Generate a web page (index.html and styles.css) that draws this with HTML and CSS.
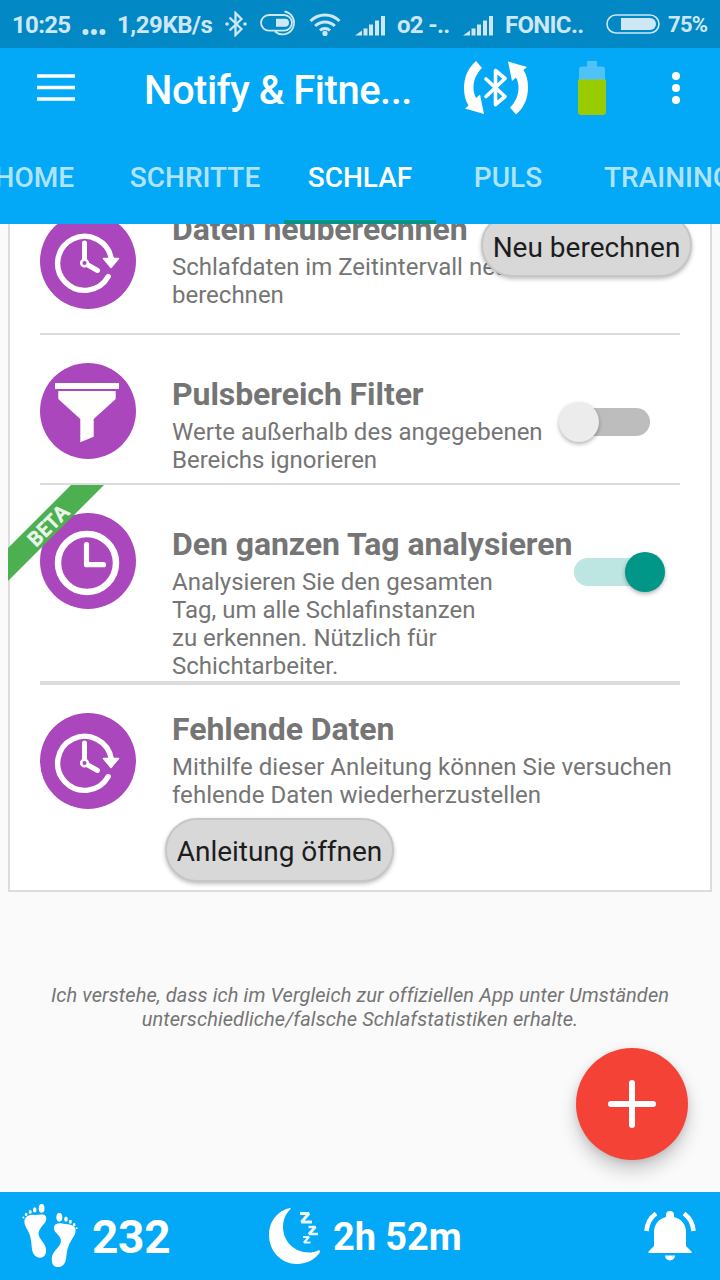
FILE: index.html
```html
<!DOCTYPE html>
<html lang="de">
<head>
<meta charset="utf-8">
<title>Notify &amp; Fitness</title>
<link rel="stylesheet" href="styles.css">
</head>
<body>
<svg class="defs" aria-hidden="true">
  <symbol id="history" viewBox="0 0 96 96">
    <path d="M71.300 46A27 27 0 1 0 68.200 63.500" fill="none" stroke="#fff" stroke-width="5.400" stroke-linecap="round"/>
    <path d="M63.500 45.500H78.500L71 54.500z" fill="#fff" stroke="#fff" stroke-width="1.500" stroke-linejoin="round"/>
    <path d="M44.500 47V30M47 51.500l10.500 6" fill="none" stroke="#fff" stroke-width="5" stroke-linecap="round"/>
    <circle cx="44.500" cy="50" r="3.300" fill="#ab47bc" stroke="#fff" stroke-width="2.500"/>
  </symbol>
  <symbol id="signal" viewBox="0 0 32 24">
    <path d="M0 22.500l7-5v5zM8.500 15.500h4v7h-4zM14 11.500h4v11h-4zM20 7.500h4v15h-4zM26 3h4v19.500h-4z" fill="currentColor"/>
  </symbol>
</svg>
<div class="screen">
  <div class="status">
    <span class="st-time">10:25</span>
    <svg class="st-dots" viewBox="0 0 24 8"><g fill="currentColor"><circle cx="3.500" cy="4" r="3"/><circle cx="12" cy="4" r="3"/><circle cx="20.500" cy="4" r="3"/></g></svg>
    <span class="st-rate">1,29KB/s</span>
    <svg class="st-bt" viewBox="0 0 22 26"><path d="M4.500 6.500l12 11.500-6 6V2l6 6L4.500 19.500" fill="none" stroke="currentColor" stroke-width="2.300"/><circle cx="2" cy="13" r="1.800" fill="currentColor"/><circle cx="20" cy="13" r="1.800" fill="currentColor"/></svg>
    <svg class="st-pill" viewBox="0 0 38 28"><path d="M24 5H9a8 7.800 0 0 0 0 15.600h15a8 7.800 0 0 0 0-15.600zM24.500 1.500a11.500 11.500 0 1 1-9.500 20" fill="none" stroke="currentColor" stroke-width="1.800"/><path d="M16 8.800h9a4 4 0 0 1 0 8h-9z" fill="currentColor"/></svg>
    <svg class="st-wifi" viewBox="0 0 32 24"><g fill="none" stroke="currentColor" stroke-width="3"><path d="M1.500 9a20.500 20.500 0 0 1 29 0M6.200 14a13.800 13.800 0 0 1 19.600 0M11 18.500a7.200 7.200 0 0 1 10 0"/></g><circle cx="16" cy="21.400" r="2.600" fill="currentColor"/></svg>
    <svg class="st-sig1"><use href="#signal"/></svg>
    <span class="st-net1">o2 -..</span>
    <svg class="st-sig2"><use href="#signal"/></svg>
    <span class="st-net2">FONIC..</span>
    <svg class="st-batt" viewBox="0 0 54 20"><rect x="1" y="1" width="52" height="18" rx="9" fill="none" stroke="currentColor" stroke-width="1.600"/><path d="M15 4h29a6 6 0 0 1 0 12H15z" fill="currentColor"/></svg>
    <span class="st-pct">75%</span>
  </div>

  <header class="appbar">
    <div class="toolbar">
      <svg class="menu" viewBox="0 0 38 28"><path d="M0 2h38M0 13.500h38M0 25h38" stroke="#fff" stroke-width="3.600"/></svg>
      <h1>Notify &amp; Fitne...</h1>
      <svg class="sync" viewBox="0 0 64 54">
        <g fill="#fff">
          <path id="arc" d="M12 0C4 7 0 16 0 27c0 7 1.500 13 4.500 17.500L1 47.500 20 53l-4-19.500-4 3.500C10 33 9.500 30 9.500 27c0-8 3-14.500 8.500-20z"/>
          <use href="#arc" transform="rotate(180 32 26.700)"/>
        </g>
        <path d="M22 18l19 17.500-9.500 8V9.500l9.500 8L22 35.500" fill="none" stroke="#fff" stroke-width="3.600" stroke-linecap="round" stroke-linejoin="round"/>
      </svg>
      <svg class="band" viewBox="0 0 28 54"><path d="M9 0h10v5.500h5a3 3 0 0 1 3 3V20H1V8.500a3 3 0 0 1 3-3h5z" fill="#4fc3f7"/><path d="M0 18.500h28V51a3 3 0 0 1-3 3H3a3 3 0 0 1-3-3z" fill="#99cc00"/></svg>
      <svg class="more" viewBox="0 0 8 32"><g fill="#fff"><circle cx="4" cy="4" r="4"/><circle cx="4" cy="16" r="4"/><circle cx="4" cy="28" r="4"/></g></svg>
    </div>
    <nav class="tabs">
      <span class="tab tab-home">HOME</span>
      <span class="tab tab-steps">SCHRITTE</span>
      <span class="tab tab-sleep active">SCHLAF</span>
      <span class="tab tab-pulse">PULS</span>
      <span class="tab tab-train">TRAINING</span>
    </nav>
  </header>

  <main>
    <section class="card">
      <div class="row row-recalc">
        <div class="badge"><svg><use href="#history"/></svg></div>
        <div class="text">
          <h2>Daten neuberechnen</h2>
          <p>Schlafdaten im Zeitintervall neu<br>berechnen</p>
        </div>
        <button class="btn btn-recalc">Neu berechnen</button>
      </div>
      <div class="row row-pulse">
        <div class="badge"><svg viewBox="0 0 96 96"><path d="M15 20h64v6H15zM18.300 28h57.400v8L53.700 56v17.700L40.300 79.300V56l-22-20z" fill="#fffffd"/></svg></div>
        <div class="text">
          <h2>Pulsbereich Filter</h2>
          <p>Werte außerhalb des angegebenen<br>Bereichs ignorieren</p>
        </div>
        <div class="switch"><i></i></div>
      </div>
      <div class="row row-day">
        <div class="badge"><svg viewBox="0 0 96 96"><g fill="none" stroke="#fff"><circle cx="47" cy="50" r="29" stroke-width="6.500"/><path d="M46.500 31.500v20.200h17" stroke-width="5.200" stroke-linecap="round" stroke-linejoin="round"/></g></svg></div>
        <div class="text">
          <h2>Den ganzen Tag analysieren</h2>
          <p>Analysieren Sie den gesamten<br>Tag, um alle Schlafinstanzen<br>zu erkennen. Nützlich für<br>Schichtarbeiter.</p>
        </div>
        <div class="switch on"><i></i></div>
        <svg class="ribbon" viewBox="0 0 96 96"><path d="M63 0h33L0 96V63z" fill="#4caf50"/><text x="40.500" y="41" transform="rotate(-45 40.500 41)" dy="6.500" text-anchor="middle" textLength="49">BETA</text></svg>
      </div>
      <div class="row row-missing">
        <div class="badge"><svg><use href="#history"/></svg></div>
        <div class="text">
          <h2>Fehlende Daten</h2>
          <p>Mithilfe dieser Anleitung können Sie versuchen<br>fehlende Daten wiederherzustellen</p>
          <button class="btn btn-guide">Anleitung öffnen</button>
        </div>
      </div>
    </section>
    <p class="note">Ich verstehe, dass ich im Vergleich zur offiziellen App unter Umständen<br>unterschiedliche/falsche Schlafstatistiken erhalte.</p>
    <button class="fab" aria-label="Hinzufügen"><svg viewBox="0 0 48 48"><path d="M24 3v42M3 24h42" stroke="#fff" stroke-width="6" stroke-linecap="round"/></svg></button>
  </main>

  <footer class="bottom">
    <svg class="feet" viewBox="0 0 56 66">
      <g fill="#fff">
        <path d="M2 18c0-4 3-6.500 8-7 5 .3 9-1 12 0 3 1.500 3 6 0 9-3 3.500-6 7-5.500 11 .5 5 7 9 7.500 15 .3 5-1.500 8.500-6 8.500-5 0-8-4-8.500-10C9 36 8 32 5.500 27 4 24 2 21.500 2 18z"/>
        <ellipse cx="19.500" cy="4.500" rx="2.900" ry="4.400"/><ellipse cx="12.500" cy="6" rx="1.800" ry="2.700"/><ellipse cx="7.900" cy="8" rx="1.500" ry="2"/><ellipse cx="3.800" cy="10.700" rx="1.300" ry="1.700"/><circle cx="1" cy="13.700" r="1"/>
        <path d="M54 27c0-4-3-6-8-6.500-5-.5-9-2-12 0-3 2-2.500 6 .5 9 3 3.500 5 5 4.500 9-.5 5-8 9-9 15-.8 6 1 10.500 6 10.500s8-4 8.500-10c.5-7 2-12 5-17 2.500-4 4.500-6 4.500-10z"/>
        <ellipse cx="37.500" cy="13.500" rx="3" ry="4.400"/><ellipse cx="44.200" cy="15.300" rx="1.800" ry="2.700"/><ellipse cx="48.700" cy="18" rx="1.500" ry="2.100"/><ellipse cx="52.500" cy="21" rx="1.300" ry="1.700"/><circle cx="55" cy="24.500" r="1"/>
      </g>
    </svg>
    <span class="steps">232</span>
    <svg class="moon" viewBox="0 0 52 58">
      <path d="M21 1C9 3.500 0 14 0 28c0 16 12 29 28 29 10 0 19-5 23-12 0-1.500-1-2-2-1.500-3 1.500-6 2-9 2C25 45.500 14 34 14 20c0-7 2.500-13 7.500-18 .3-.7 0-1-.5-1z" fill="#fff"/>
      <g fill="none" stroke="#e8f6ff" stroke-linejoin="bevel"><path d="M31 6.500h9L32.500 15H43" stroke-width="3"/><path d="M39.500 20h7l-6.500 7h9" stroke-width="2.700"/><path d="M34 30h6l-5 5.500h6.500" stroke-width="2.200"/></g>
    </svg>
    <span class="sleep">2h 52m</span>
    <svg class="bell" viewBox="0 0 52 50">
      <path d="M22 4a4 4 0 0 1 8 0v2c8 2 12 8 12 15v14l5.500 5.500V42h-43v-1.500L10 35V21C10 14 14 8 22 6z" fill="#fff"/>
      <path d="M21 44.500h10a5 5 0 0 1-10 0z" fill="#fff"/>
      <path d="M2.500 20C3 12.500 6.500 6.500 12 2.500M49.500 20C49 12.500 45.500 6.500 40 2.500" fill="none" stroke="#fff" stroke-width="4.600"/>
    </svg>
  </footer>
</div>
</body>
</html>
```
FILE: styles.css
```css
* { box-sizing: border-box; }
body { margin: 0; font-family: Roboto, "Liberation Sans", sans-serif; }
h1, h2, p { margin: 0; }
svg { display: block; flex: none; }
.defs { position: absolute; width: 0; height: 0; }
.screen { width: 720px; height: 1280px; display: flex; flex-direction: column; overflow: hidden; background: #fafafa; }

.status { height: 48px; flex: none; display: flex; align-items: center; background: #0288c4; color: #cde7f5; font-size: 24px; font-weight: 700; line-height: 48px; letter-spacing: -.7px; padding-left: 12px; white-space: nowrap; }
.status span { flex: none; padding-top: 2px; }
.st-time { width: 70px; }
.st-dots { width: 24px; height: 8px; margin-top: 15px; }
.status .st-rate { width: 119px; padding-left: 11px; letter-spacing: -.45px; }
.st-bt { width: 22px; height: 26px; }
.st-pill { width: 38px; height: 28px; margin-left: 13px; }
.st-wifi { width: 32px; height: 24px; margin-left: 11px; }
.st-sig1, .st-sig2 { width: 32px; height: 24px; margin-left: 14px; margin-top: 1px; }
.st-net1 { width: 52px; margin-left: 10px; }
.st-net2 { width: 84px; margin-left: 10px; }
.st-batt { width: 54px; height: 20px; margin-left: 17px; }
.st-pct { margin-left: 8px; font-size: 22px; }

.appbar { height: 176px; flex: none; background: #03a9f6; color: #fff; display: flex; flex-direction: column; justify-content: space-between; }
.toolbar { height: 84px; display: flex; align-items: center; padding-left: 37px; }
.menu { width: 38px; height: 28px; margin-bottom: 4px; }
h1 { width: 320px; margin-left: 69px; padding-top: 2px; font-size: 40px; font-weight: 500; line-height: 48px; letter-spacing: -.5px; white-space: nowrap; }
.sync { width: 64px; height: 54px; margin-top: -4px; }
.band { width: 28px; height: 54px; margin-left: 50px; margin-top: -4px; }
.more { width: 8px; height: 32px; margin-left: 66px; margin-top: -4px; }
.tabs { height: 92px; display: flex; overflow: hidden; font-size: 28px; font-weight: 500; line-height: 92px; white-space: nowrap; color: rgba(255,255,255,.7); }
.tab { flex: none; text-align: center; }
.tab-home { width: 106px; padding-right: 32px; display: flex; justify-content: flex-end; }
.tab-steps { width: 178px; }
.tab-sleep { width: 152px; }
.tab-pulse { width: 144px; }
.tab-train { width: 168px; padding-left: 24px; text-align: left; }
.active { color: #fff; border-bottom: 4px solid #009688; }

main { height: 968px; flex: none; overflow: hidden; position: relative; }
.card { width: 704px; height: 709px; margin: -41px 8px 0; border: 2px solid #dcdcdc; background: #fff; padding: 0 30px; }
.row { height: 150px; display: flex; position: relative; border-bottom: 2px solid #dcdcdc; }
.row-day { height: 200px; border-bottom-width: 4px; }
.row-missing { height: 205px; border-bottom: 0; }
.badge { width: 96px; height: 96px; flex: none; margin: 28px 36px 0 0; border-radius: 50%; background: #ab47bc; }
.badge svg { width: 96px; height: 96px; }
.text { flex: none; padding-top: 25px; color: #757575; white-space: nowrap; }
.row-pulse .text, .row-day .text { padding-top: 40px; }
h2 { font-size: 32px; font-weight: 700; line-height: 38px; letter-spacing: -.07px; }
.text p { margin-top: 5px; font-size: 24px; line-height: 28px; }
.row-missing .text p { letter-spacing: .05px; }
.btn { display: block; height: 64px; padding: 4px 0 0; border: 2px solid #c6c6c6; border-radius: 32px; background: #d8d8d8; color: #1d1d1d; font: 400 28px/54px Roboto, sans-serif; text-align: center; white-space: nowrap; box-shadow: 0 2px 4px rgba(0,0,0,.26); }
.btn-recalc { position: absolute; right: -12px; top: 28px; width: 211px; padding-top: 6px; }
.btn-guide { width: 229px; margin: 9px 0 0 -7px; letter-spacing: -.05px; }
.switch { width: 91px; height: 28px; margin: 73px 30px 0 auto; border-radius: 14px; background: linear-gradient(to right, transparent 15px, #bdbdbd 15px); position: relative; }
.switch i { position: absolute; left: 0; top: -6px; width: 40px; height: 40px; border-radius: 50%; background: #ececec; box-shadow: 0 2px 4px rgba(0,0,0,.3); }
.switch.on { margin-right: 15px; background: #bde5e1; }
.switch.on i { left: auto; right: 0; background: #009688; }
.ribbon { position: absolute; left: -32px; top: 0; width: 96px; height: 96px; }
.ribbon text { font: 600 20px "Open Sans", sans-serif; fill: #eaf6ea; stroke: #eaf6ea; stroke-width: .8px; }
.note { margin-top: 91px; text-align: center; color: #757575; font-size: 20px; font-style: italic; line-height: 24px; letter-spacing: .1px; }
.fab { position: absolute; right: 32px; bottom: 32px; width: 112px; height: 112px; padding: 0; border: 0; border-radius: 50%; background: #f44336; display: flex; align-items: center; justify-content: center; box-shadow: 0 10px 18px rgba(0,0,0,.2), 0 2px 6px rgba(0,0,0,.1); }
.fab svg { width: 48px; height: 48px; }

.bottom { height: 88px; flex: none; display: flex; align-items: center; padding-left: 22px; background: #03a9f6; color: #fff; font-weight: 700; white-space: nowrap; }
.feet { width: 56px; height: 65px; }
.steps { width: 177px; margin-left: 14px; font-size: 46px; line-height: 60px; padding-top: 2px; letter-spacing: -.3px; }
.moon { width: 52px; height: 58px; }
.sleep { width: 310px; margin-left: 12px; font-size: 38px; line-height: 60px; padding-top: 1px; letter-spacing: -.1px; }
.bell { width: 52px; height: 50px; margin-left: 1px; }
```
